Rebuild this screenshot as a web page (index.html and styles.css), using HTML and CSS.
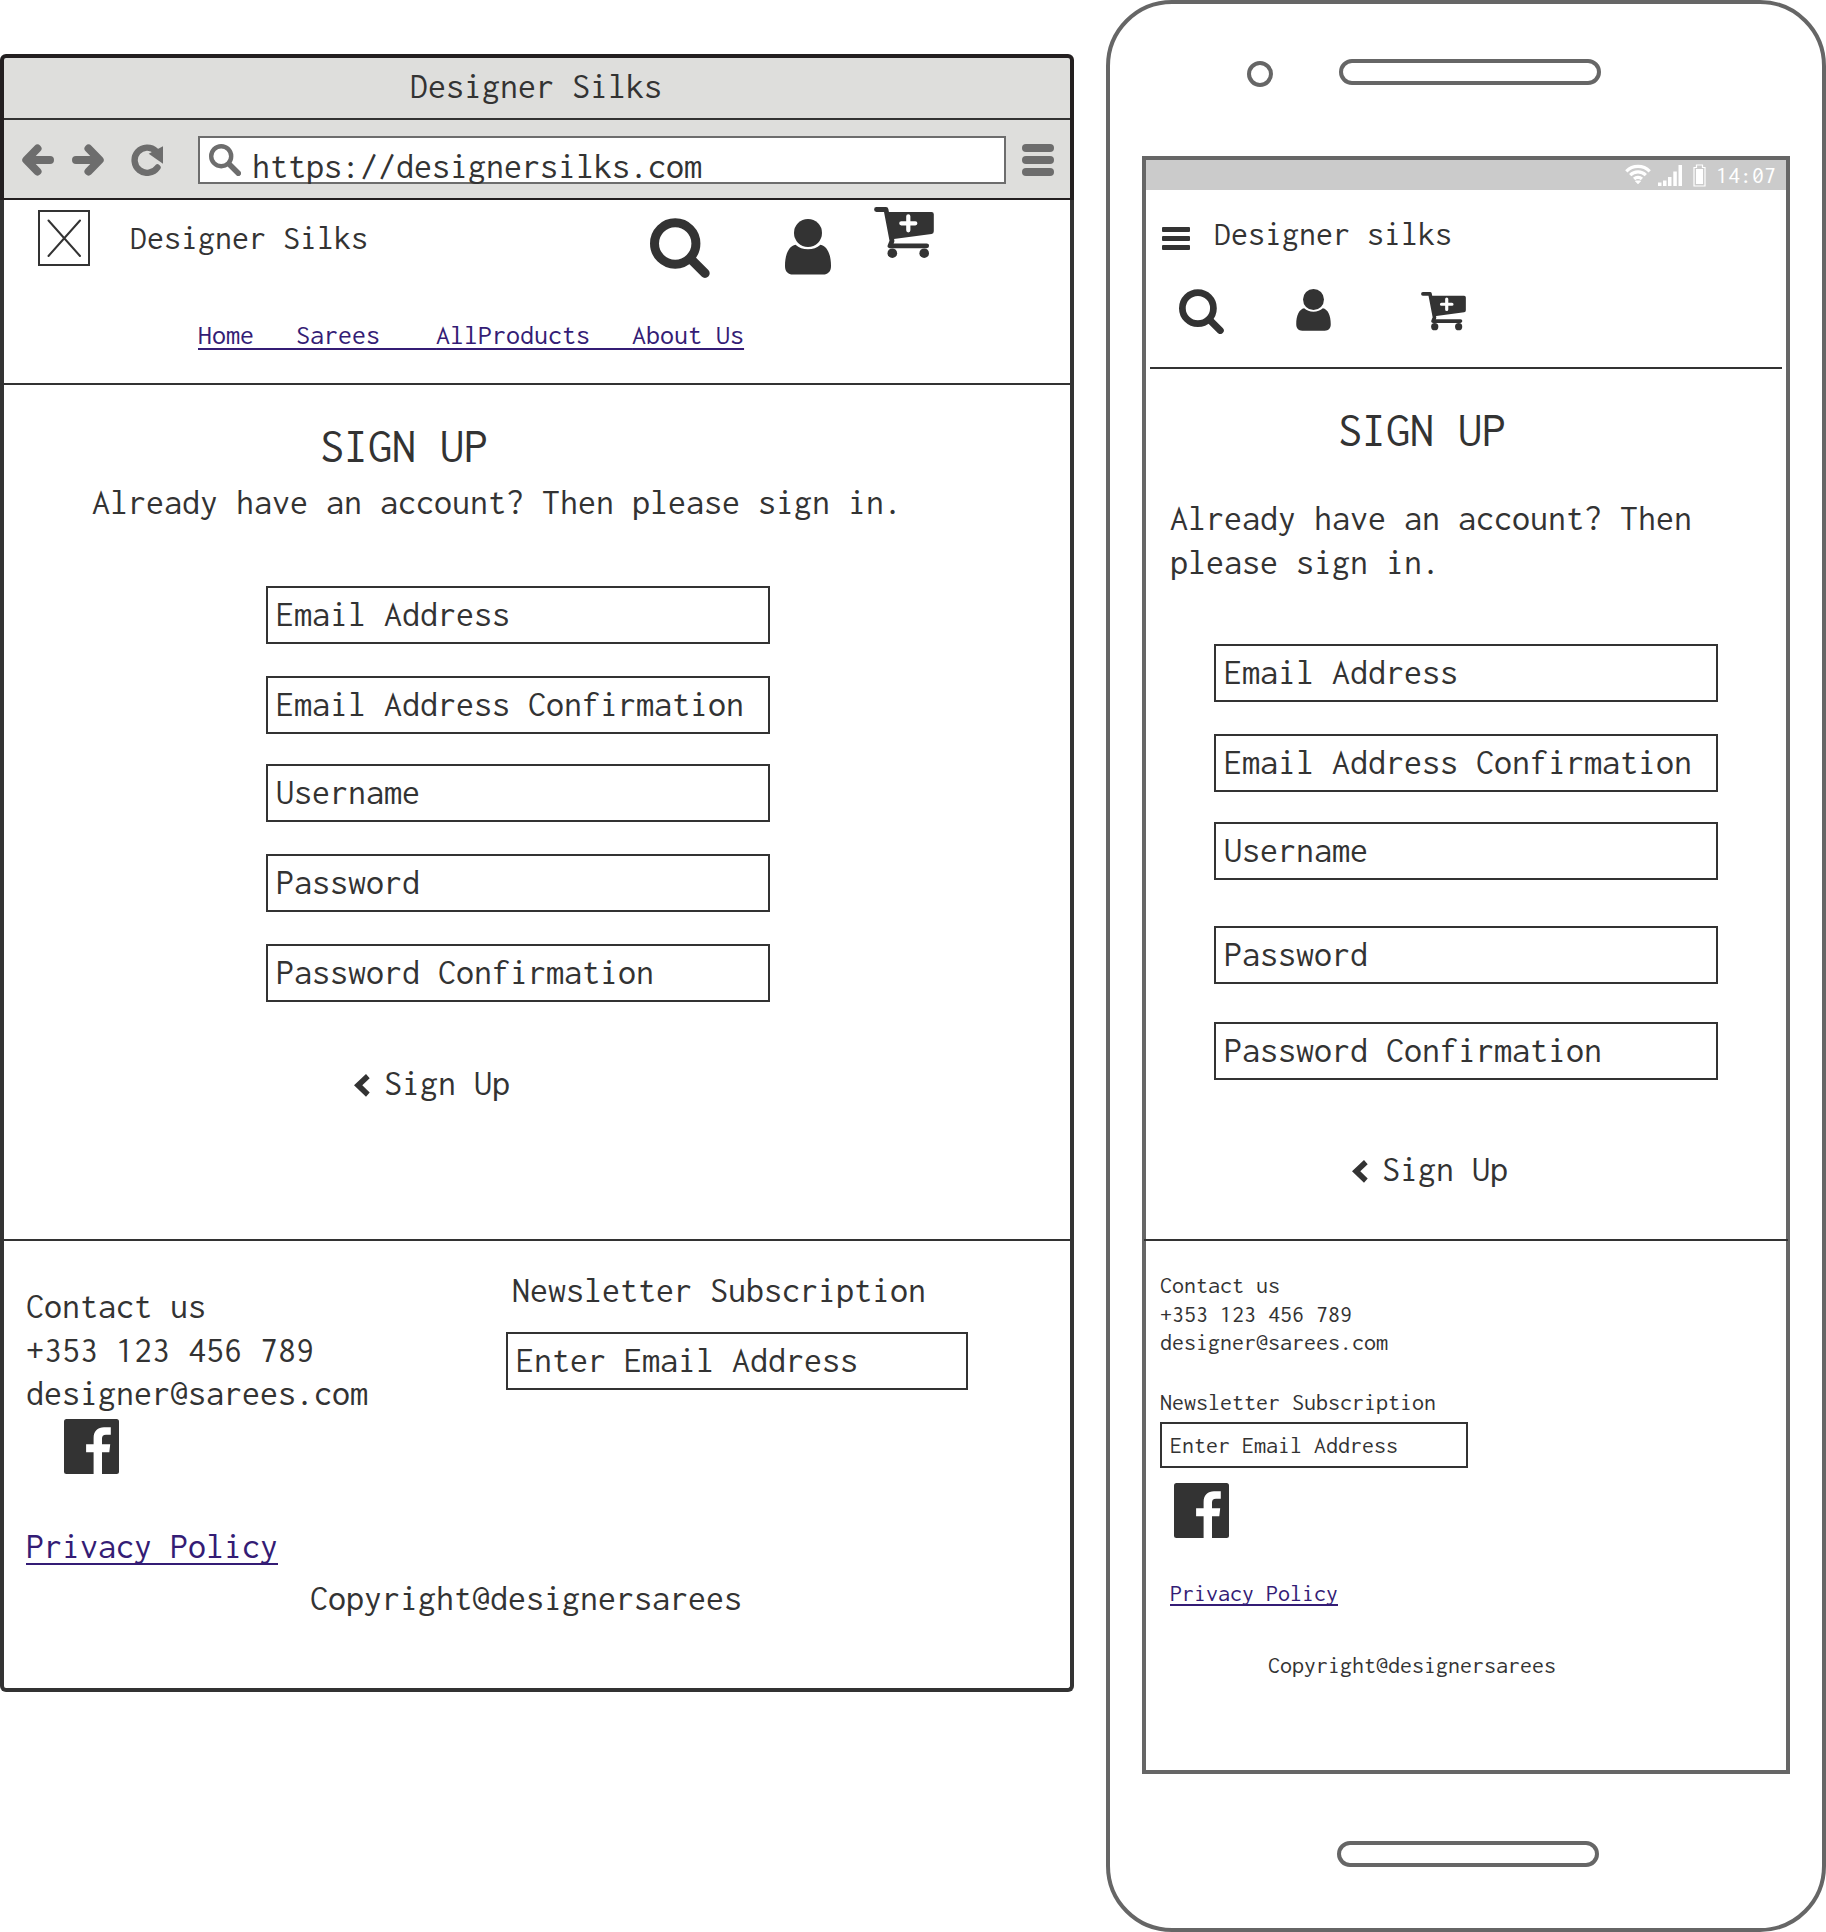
FILE: index.html
```
<!DOCTYPE html>
<html lang="en">
<head>
<meta charset="utf-8">
<title>Designer Silks – Sign Up</title>
<link rel="stylesheet" href="styles.css">
</head>
<body>

<svg class="sprite" aria-hidden="true">
  <symbol id="search" viewBox="0 0 60 60">
    <circle cx="25.2" cy="25.5" r="20.7" fill="none" stroke="currentColor" stroke-width="9"/>
    <path d="M41 41.3 55 55.3" stroke="currentColor" stroke-width="9.4" stroke-linecap="round"/>
  </symbol>
  <symbol id="user" viewBox="0 0 46 56">
    <circle cx="23" cy="14" r="14" fill="currentColor"/>
    <path fill="currentColor" d="M10.5 25.7C4 27 0 35 0 47C0 52.5 3 55.6 8 55.6H38C43 55.6 46 52.5 46 47C46 35 42 27 35.5 25.7C32 28.900 28 30.300 23 30.300C18 30.300 14 28.900 10.500 25.700Z"/>
  </symbol>
  <symbol id="cart" viewBox="0 0 60 52">
    <path d="M2.500 2.500H12L18 34L16 38.800H52.700" fill="none" stroke="currentColor" stroke-width="4.800" stroke-linecap="round" stroke-linejoin="round"/>
    <path fill="currentColor" d="M12 5H57.500Q59.800 5 59.800 7.300V24.300Q59.800 26.800 57.500 27.100L18 32.300Z"/>
    <circle cx="18.300" cy="46.200" r="4.800" fill="currentColor"/>
    <circle cx="50.200" cy="46.200" r="4.800" fill="currentColor"/>
    <path d="M34.300 9.300V23.300M27.300 16.300H41.300" stroke="#fff" stroke-width="4.200" stroke-linecap="round"/>
  </symbol>
  <symbol id="facebook" viewBox="0 0 55 55">
    <rect width="55" height="55" rx="2.500" fill="currentColor"/>
    <path fill="#fff" d="M29.600 55V33.300H22.100V25.300H29.600V19C29.600 12 34 8.300 40 8.300H46.800V15.700H42C39 15.700 38 17 38 19.500V25.300H46.200L45.300 33.300H38V55Z"/>
  </symbol>
  <symbol id="chevron" viewBox="0 0 16 23">
    <path fill="currentColor" d="M0 11.300 12 0 15.700 4.300 8.300 11.300 15.700 18.500 12 22.700Z"/>
  </symbol>
</svg>

<section class="browser">
  <div class="chrome">
    <div class="titlebar">Designer Silks</div>
    <div class="toolbar">
      <svg class="tool back" viewBox="0 0 32 32"><path d="M15.500 4.500 4.300 16 15.500 27.500M5 16H28"/></svg>
      <svg class="tool forward" viewBox="0 0 32 32"><path d="M16.500 4.500 27.700 16 16.500 27.500M27 16H4"/></svg>
      <svg class="tool reload" viewBox="0 0 32 32"><path class="thin" d="M25 7.200A12.600 12.600 0 1 0 26.500 23.500"/><path class="solid" d="M32 2.300V19.700L17.700 9.700Z"/></svg>
      <div class="url">
        <svg class="tool" viewBox="0 0 32 32"><circle class="lens" cx="12.200" cy="12.200" r="10"/><path class="handle" d="M20.500 20.500 29.300 29.300"/></svg>
        <span>https://designersilks.com</span>
      </div>
      <div class="menu"><i></i><i></i><i></i></div>
    </div>
  </div>

  <div class="page">
    <header class="site-header">
      <div class="brand-row">
        <svg class="logo" viewBox="0 0 52 56"><path d="M1 1H51V55H1ZM10.500 10.500 42 46M42 10.500 10.500 46"/></svg>
        <div class="brand">Designer Silks</div>
        <svg class="icon-search"><use href="#search"/></svg>
        <svg class="icon-user"><use href="#user"/></svg>
        <svg class="icon-cart"><use href="#cart"/></svg>
      </div>
      <nav class="nav"><a>Home   </a><a>Sarees    </a><a>AllProducts   </a><a>About Us</a></nav>
    </header>

    <main class="signup">
      <h1>SIGN UP</h1>
      <p class="intro">Already have an account? Then please sign in.</p>
      <form class="fields">
        <div class="field">Email Address</div>
        <div class="field">Email Address Confirmation</div>
        <div class="field username">Username</div>
        <div class="field">Password</div>
        <div class="field">Password Confirmation</div>
      </form>
      <div class="submit"><svg><use href="#chevron"/></svg><span>Sign Up</span></div>
    </main>

    <footer class="footer">
      <div class="footer-cols">
        <div class="contact">
          <p>Contact us<br>+353 123 456 789<br>designer@sarees.com</p>
          <svg class="fb"><use href="#facebook"/></svg>
          <a class="privacy">Privacy Policy</a>
        </div>
        <div class="newsletter">
          <p>Newsletter Subscription</p>
          <div class="field">Enter Email Address</div>
        </div>
      </div>
      <p class="copyright">Copyright@designersarees</p>
    </footer>
  </div>
</section>

<section class="phone">
  <div class="phone-top"><div class="camera"></div><div class="speaker"></div></div>
  <div class="screen">
    <div class="status">
      <svg class="wifi" viewBox="0 0 26 20"><path d="M1.300 7.300A16.500 16.500 0 0 1 24.700 7.300M5.200 11.200A11 11 0 0 1 20.800 11.200M9.100 15A5.500 5.500 0 0 1 16.900 15"/><path class="dot" d="M10.500 17 15.500 17 13 19.800Z"/></svg>
      <svg class="signal" viewBox="0 0 24 21"><path d="M0 17.500H3.500V21H0ZM5 15.500H8.500V21H5ZM10 12H13.500V21H10ZM15.300 6.500H18.800V21H15.300ZM20.500 0H24V21H20.500Z"/></svg>
      <svg class="battery" viewBox="0 0 13 23"><path class="case" d="M1 3.500H3.500V1H9.500V3.500H12V22H1Z"/><path d="M3 5H10V20H3Z"/></svg>
      <span>14:07</span>
    </div>
    <header class="site-header">
      <div class="brand-row">
        <div class="burger"><i></i><i></i><i></i></div>
        <div class="brand">Designer silks</div>
      </div>
      <div class="icon-row">
        <svg class="icon-search"><use href="#search"/></svg>
        <svg class="icon-user"><use href="#user"/></svg>
        <svg class="icon-cart"><use href="#cart"/></svg>
      </div>
    </header>

    <main class="signup">
      <h1>SIGN UP</h1>
      <p class="intro">Already have an account? Then please sign in.</p>
      <form class="fields">
        <div class="field">Email Address</div>
        <div class="field">Email Address Confirmation</div>
        <div class="field username">Username</div>
        <div class="field password">Password</div>
        <div class="field confirm">Password Confirmation</div>
      </form>
      <div class="submit"><svg><use href="#chevron"/></svg><span>Sign Up</span></div>
    </main>

    <footer class="footer">
      <p>Contact us<br>+353 123 456 789<br>designer@sarees.com</p>
      <p class="news-title">Newsletter Subscription</p>
      <div class="field">Enter Email Address</div>
      <svg class="fb"><use href="#facebook"/></svg>
      <a class="privacy">Privacy Policy</a>
      <p class="copyright">Copyright@designersarees</p>
    </footer>
  </div>
  <div class="speaker home"></div>
</section>

</body>
</html>
```
FILE: styles.css
```
* { box-sizing: border-box; }

body {
  margin: 0;
  display: flex;
  align-items: flex-start;
  background: #fff;
  color: #333;
  font-family: Inconsolata, "Liberation Mono", monospace;
  font-size: 36px;
  line-height: 1.2;
}

h1, p { margin: 0; font-weight: 400; }
h1 { font-size: 48px; }
svg { display: block; flex: none; }
a {
  color: #341c75;
  text-decoration: underline 2px;
  text-decoration-skip-ink: none;
}
.sprite { display: none; }

.brand { font-size: 34px; white-space: nowrap; }
.brand-row, .icon-row { display: flex; align-items: flex-start; }

.field {
  display: flex;
  align-items: center;
  width: 504px;
  height: 58px;
  padding: 0 0 0 8px;
  border: 2px solid #333;
  white-space: nowrap;
}
.fields .field + .field { margin-top: 32px; }
.fields .field.username { margin-top: 30px; }

.submit { display: flex; align-items: flex-start; }
.submit svg { width: 16px; height: 23px; margin: 12px 14px 0 0; }

.fb { width: 55px; height: 55px; }
.privacy { display: block; width: max-content; }

/* Desktop browser */
.browser { width: 1074px; margin-top: 54px; flex: none; }

.chrome {
  border: 4px solid #231f20;
  border-bottom-width: 2px;
  border-radius: 6px 6px 0 0;
  background: #dededc;
}
.titlebar {
  display: flex;
  align-items: center;
  justify-content: center;
  height: 62px;
  padding: 0 2px 2px 0;
  border-bottom: 2px solid #333;
}
.toolbar {
  display: flex;
  align-items: center;
  height: 78px;
  padding: 2px 16px 0 18px;
}
.tool { width: 32px; height: 32px; }
.tool path, .tool circle {
  fill: none;
  stroke: #6d6d6d;
  stroke-width: 8;
  stroke-linecap: round;
  stroke-linejoin: round;
}
.tool .thin { stroke-width: 6.4; }
.tool .lens { stroke-width: 4.4; }
.tool .handle { stroke-width: 5.5; }
.tool .solid { fill: #6d6d6d; stroke: none; }
.forward { margin-left: 18px; }
.reload { margin-left: 27px; }
.url {
  display: flex;
  align-items: center;
  width: 808px;
  height: 48px;
  margin-left: 35px;
  padding-left: 9px;
  border: 2px solid #6d6d6d;
  background: #fff;
}
.url span { margin-left: 11px; padding-top: 14px; }
.menu { display: grid; gap: 4px; width: 32px; margin-left: 16px; }
.menu i { height: 8px; border-radius: 4px; background: #6d6d6d; }

.page {
  height: 1492px;
  border: solid #333;
  border-width: 0 4px 4px;
  border-radius: 0 0 6px 6px;
}
.page .site-header { height: 185px; border-bottom: 2px solid #333; }
.page .brand-row { height: 118px; padding-left: 34px; }
.page .brand { margin: 18px 282px 0 40px; }
.logo { width: 52px; height: 56px; margin-top: 10px; }
.logo path { fill: none; stroke: #333; stroke-width: 2; stroke-linecap: round; }
.page .icon-search { width: 60px; height: 60px; margin-top: 18px; }
.page .icon-user { width: 46px; height: 56px; margin: 18.5px 43px 0 75px; }
.page .icon-cart { width: 60px; height: 52px; margin-top: 7px; }
.nav {
  padding-left: 194px;
  font-size: 28px;
  white-space: pre;
}
.nav a { text-underline-offset: 4px; }

.page .signup { height: 854px; padding-top: 33px; }
.page h1 { height: 58px; margin-left: 316px; }
.page .intro { height: 43px; margin: 5px 0 0 88px; }
.page .fields { margin: 62px 0 0 262px; }
.page .submit { margin: 60px 0 0 350px; }

.page .footer { border-top: 2px solid #333; }
.footer-cols { display: flex; }
.contact { width: 480px; padding: 44px 0 0 22px; }
.contact p { line-height: 43.5px; }
.page .fb { margin: 3px 0 51px 38px; }
.page .privacy { text-underline-offset: 5px; }
.newsletter { padding-top: 28px; }
.newsletter p { padding-left: 28px; }
.newsletter .field { width: 462px; margin: 20px 0 0 22px; padding-bottom: 1px; }
.page .copyright { margin: 9px 0 0 306px; }

/* Phone */
.phone {
  width: 720px;
  height: 1932px;
  margin-left: 32px;
  flex: none;
  border: 4px solid #666;
  border-radius: 66px;
}
.phone-top { display: flex; height: 152px; padding: 55px 0 0 137px; }
.camera {
  width: 26px;
  height: 26px;
  margin: 2px 66px 0 0;
  border: 4px solid #666;
  border-radius: 50%;
}
.speaker {
  width: 262px;
  height: 26px;
  border: 4px solid #666;
  border-radius: 13px;
}
.home { margin: 67px 0 0 227px; }
.screen {
  width: 648px;
  height: 1618px;
  margin-left: 32px;
  border: 4px solid #666;
}
.status {
  display: flex;
  align-items: center;
  justify-content: flex-end;
  height: 30px;
  padding-right: 10px;
  background: #cbcbcb;
  color: #fff;
  font-size: 24px;
}
.status path { fill: #fff; }
.status .wifi { width: 26px; height: 20px; margin: 0 7px 2px 0; }
.status .wifi path { fill: none; stroke: #fff; stroke-width: 3.2; }
.status .wifi .dot { fill: #fff; stroke-width: 1; }
.status .signal { width: 24px; height: 21px; margin-right: 11px; }
.status .battery { width: 13px; height: 23px; margin-right: 10px; }
.status .battery .case { fill: none; stroke: #fff; stroke-width: 1.2; }

.screen .site-header {
  height: 179px;
  margin: 0 4px;
  border-bottom: 2px solid #333;
}
.screen .brand-row { height: 99px; padding: 24px 0 0 12px; }
.burger { display: grid; gap: 4px; width: 28px; margin: 13px 24px 0 0; }
.burger i { height: 5px; border-radius: 1px; background: #333; }
.icon-row { padding-left: 29px; }
.icon-row .icon-search { width: 45px; height: 45px; }
.icon-row .icon-user { width: 35px; height: 42px; margin: 0 90px 0 72px; }
.icon-row .icon-cart { width: 45px; height: 39px; margin-top: 3px; }

.screen .signup { height: 870px; padding-top: 33px; }
.screen h1 { height: 58px; margin-left: 192px; }
.screen .intro { width: 560px; margin: 36px 0 0 24px; line-height: 44px; }
.screen .fields { margin: 60px 0 0 68px; }
.screen .fields .password { margin-top: 46px; }
.screen .fields .confirm { margin-top: 38px; }
.screen .submit { margin: 68px 0 0 206px; }

.screen .footer {
  margin: 0 -2px;
  padding: 30px 0 0 16px;
  border-top: 2px solid #333;
  font-size: 24px;
}
.screen .footer p { line-height: 28.5px; }
.screen .news-title { margin-top: 31px; }
.screen .footer .field { width: 308px; height: 46px; margin-top: 6px; padding: 0 0 0 8px; }
.screen .fb { margin: 15px 0 41px 14px; }
.screen .privacy { margin-left: 10px; text-underline-offset: 3px; }
.screen .copyright { margin: 43px 0 0 108px; }
```
